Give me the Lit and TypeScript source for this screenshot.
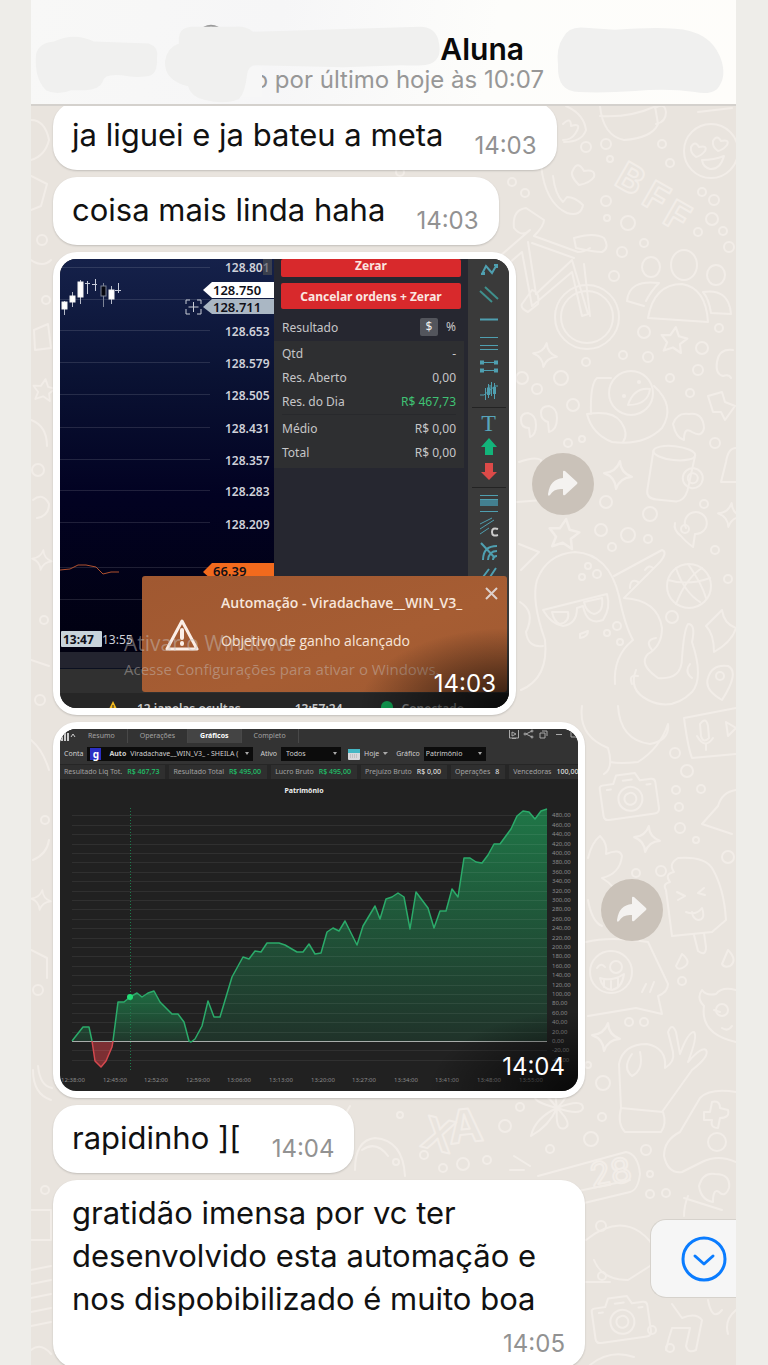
import {css, html, svg, LitElement} from 'lit';
import {customElement, property} from 'lit/decorators.js';

const PRICES: [string, number][] = [
    ['128.653', 72], ['128.579', 104], ['128.505', 136], ['128.431', 169],
    ['128.357', 201], ['128.283', 232], ['128.209', 265],
];

// x, top of wick, bottom of wick, top of body, bottom of body
const CANDLES = [
    [4, 42, 56, 43, 50], [12, 33, 48, 37, 43], [20, 21, 45, 23, 38],
    [51, 27, 45, 31, 40],
];

const EQUITY = [
    [118, 1002], [124, 1002], [130, 997], [137, 993], [142, 997], [148, 993], [154, 991], [160, 1002],
    [172, 1014], [178, 1014], [184, 1022], [189, 1041], [191, 1042], [195, 1039], [202, 1026], [208, 1001],
    [214, 1017], [220, 1017], [232, 977], [243, 957], [249, 959], [255, 951], [261, 952], [267, 943],
    [279, 943], [285, 945], [297, 952], [303, 952], [309, 944], [315, 954], [321, 953], [327, 932],
    [333, 928], [339, 931], [345, 921], [357, 945], [363, 926], [375, 906], [380, 919], [386, 899],
    [392, 897], [398, 893], [404, 897], [410, 929], [416, 892], [428, 908], [434, 928], [440, 911],
    [446, 911], [452, 889], [458, 897], [464, 858], [470, 858], [476, 862], [482, 863], [488, 855],
    [494, 844], [500, 844], [511, 829], [517, 816], [523, 811], [529, 812], [535, 819], [541, 811], [547, 809],
];
const START = [[72, 1041], [83, 1027], [89, 1027], [92, 1041]];
const LOSS = [[92, 1041], [95, 1061], [101, 1067], [106, 1061], [112, 1047], [113, 1041]];

const HOURS = ['12:38:00', '12:45:00', '12:52:00', '12:59:00', '13:06:00', '13:13:00',
    '13:20:00', '13:27:00', '13:34:00', '13:41:00', '13:48:00', '13:55:00'];

const line = (points: number[][]) => points.map(([x, y]) => `${x},${y}`).join(' ');

@customElement('chat-wallpaper')
class ChatWallpaper extends LitElement {
    static styles = css`
        :host {
            display: block;
            overflow: hidden;
        }
        svg {
            display: block;
            width: 100%;
            height: 100%;
            fill: none;
            stroke: #f2ede8;
            stroke-width: 2;
            stroke-linejoin: round;
            stroke-linecap: round;
        }
        text {
            font-family: Inter, sans-serif;
            font-weight: 700;
        }
    `;

    dots = [
        [586, 147, 5], [606, 144, 5], [610, 159, 3], [662, 144, 4], [670, 163, 4], [512, 182, 4], [525, 193, 4],
        [606, 201, 5], [607, 218, 3], [628, 223, 7], [644, 243, 4], [622, 252, 5], [614, 276, 5], [702, 192, 4],
        [714, 200, 5], [712, 219, 6], [698, 232, 4], [723, 231, 4], [729, 247, 5], [644, 332, 6], [719, 328, 4],
        [702, 348, 6], [648, 357, 5], [623, 355, 4], [586, 362, 4], [561, 378, 7], [537, 389, 5], [522, 378, 6],
        [573, 405, 6], [670, 378, 4], [690, 393, 4], [698, 370, 5], [568, 443, 4], [582, 439, 3], [715, 443, 5],
        [606, 502, 6], [650, 514, 7], [704, 504, 4], [601, 530, 6], [628, 535, 7], [648, 539, 4], [612, 547, 4],
        [715, 550, 4], [728, 579, 4], [672, 617, 6], [617, 626, 4], [607, 633, 3], [620, 642, 3], [588, 566, 3],
        [597, 574, 4], [582, 577, 3], [675, 753, 5], [687, 771, 6], [676, 790, 4], [701, 789, 4], [679, 807, 4],
        [680, 828, 5], [696, 840, 3], [728, 857, 6], [661, 871, 5], [636, 873, 4], [682, 981, 4], [629, 1022, 4],
        [644, 1022, 4], [603, 1083, 7], [588, 1065, 3], [602, 1117, 4], [591, 1139, 7], [550, 1149, 4],
        [646, 1150, 5], [650, 1174, 3], [650, 1194, 4], [666, 1193, 4], [505, 1126, 6], [520, 1107, 4],
        [400, 1115, 3], [424, 1155, 4], [443, 1168, 4], [463, 1164, 6], [487, 1160, 4], [396, 1162, 3],
        [601, 1226, 5], [602, 1276, 4], [652, 1330, 4], [670, 1348, 4], [42, 240, 5], [46, 300, 4], [38, 470, 6],
        [44, 620, 4], [40, 700, 5], [45, 820, 4], [38, 990, 5], [45, 1190, 4], [400, 172, 4],
    ];

    sparkles = [[545, 355, 12], [618, 475, 14], [730, 515, 12], [647, 839, 13], [606, 1037, 14], [42, 560, 10], [41, 900, 10]];
    stars = [[674, 340, 13], [564, 534, 15], [44, 390, 11]];

    sparkle([x, y, r]: number[]) {
        return svg`<path transform="translate(${x} ${y}) scale(${r / 12}) rotate(8)"
            d="M0-12Q2-2 12 0Q2 2 0 12Q-2 2-12 0Q-2-2 0-12Z"/>`;
    }

    star([x, y, r]: number[]) {
        return svg`<path transform="translate(${x} ${y}) scale(${r / 12}) rotate(8)"
            d="M0-12L4-4L12-3L6 3L8 11L0 7L-8 11L-6 3L-12-3L-4-4Z"/>`;
    }

    camera(x: number, y: number) {
        return svg`<g transform="translate(${x} ${y}) rotate(-8)">
            <path d="M-25-14h11l4-8h19l4 8h11q4 0 4 4v26q0 5-5 5h-46q-5 0-5-5v-27q0-3 3-3z"/>
            <circle cx="1" cy="3" r="12"/><circle cx="1" cy="3" r="6"/><path d="M-4-16h9M-21-9h4M19-9h4"/>
        </g>`;
    }

    render() {
        return html`
            <svg viewBox="31 106 705 1259" preserveAspectRatio="xMidYMin slice" aria-hidden="true">
                ${this.dots.map(([x, y, r]) => svg`<circle cx=${x} cy=${y} r=${r}/>`)}
                ${this.sparkles.map(this.sparkle)}
                ${this.stars.map(this.star)}
                ${this.camera(629, 796)}
                ${this.camera(621, 1319)}

                <!-- cup, phone, hearts -->
                <path d="M600 106q3 30 24 34q28-2 34-16l-3-18M600 116q30 2 56-10M655 108q10-6 11 4q0 10-10 12M698 112l34-4"/>
                <path d="M566 106q18 8 20 24q-4 12-22 12M563 124q8-8 8 2q12-4 4 8q-4 6-12 6"/>
                <path d="M541 165q4 38 26 48q14 4 16-8q-8-8-16-8l-4 5q-8-8-10-26"/>
                <path d="M573 170q5-10 11 1q12-2 10 6q-4 6-15 8q-10-10-6-15z"/>
                <circle cx="711" cy="151" r="27"/>
                <path d="M691 147q4-7 8 0q9-2 6 4q-4 5-9 6q-6-4-5-10zM713 141q4-7 8 0q9-2 6 4q-4 5-9 6q-6-4-5-10zM702 160q12 0 22-4q-4 14-14 13q-7-2-8-9z"/>
                <g font-size="38">
                    <text transform="translate(613 184) rotate(30)">B</text>
                    <text transform="translate(640 203) rotate(30)">F</text>
                    <text transform="translate(661 222) rotate(30)">F</text>
                </g>

                <!-- bicycle -->
                <circle cx="587" cy="317" r="32"/><circle cx="587" cy="317" r="26"/>
                <path d="M500 256l30-26q-8 8-16-2q-2-18 12-20l18 12q0 6-10 16l44 16q6 0 12-4M576 248l-2-10q20-6 30 0q6 10-2 14q-8 0-26-4M528 242l8 52l36-34l16 54l-6 2l-10-44l-40 34l-10-54l-14 12M532 243l42 15M584 264l6 52M532 290q8 2 6 14l-10 8q-8-4-6-8z"/>
                <!-- people -->
                <ellipse cx="651" cy="267" rx="9" ry="10"/><ellipse cx="684" cy="265" rx="13" ry="15"/><ellipse cx="716" cy="275" rx="9" ry="10"/>
                <path d="M648 318q6-34 34-34q24 4 26 38zM644 306l-17-5q2-22 32-18q-8 8-13 18M703 292q26-4 28 22l-20-1q-2-14-8-21"/>
                <!-- duck -->
                <circle cx="631" cy="393" r="22"/><path d="M611 378h-14q-7 6-6 36M654 386q22 20 8 42q-18 18-50 14q-20-8-25-28q26-4 34 8q8 12 2 20M628 405q6-18 22-16q-2 16-22 16z"/>
                <circle cx="624" cy="396" r="1"/><circle cx="639" cy="382" r="1"/>
                <path d="M521 420q0-7 7-7q8 2 8 12q0 10-6 12l-1-9q-8 0-8-8zM541 413q0-7 8-7q8 2 8 12q0 12-8 14l-1-10q-7-2-7-9z"/>
                <path d="M673 424q4-12 16-10q14-2 15 14q-2 10-12 4q-8-6-8 8q-8-2-11-16zM708 396l14-4l3 10l10 4l-10 14l-4-8l-8 0z"/>
                <path d="M717 362q2-14 16-12M717 362q-2 12 6 14q6-2 8 2"/>
                <!-- mug -->
                <g transform="rotate(6 672 475)"><ellipse cx="672" cy="453" rx="21" ry="7"/><path d="M651 453l-2 40q0 8 10 8h20q8-2 10-12l4-36"/><circle cx="693" cy="476" r="10"/><circle cx="693" cy="476" r="5"/></g>
                <path d="M686 528a11 11 0 1 1 9 6l-2 13q-8-6-12-11q-8-6-6-13"/><circle cx="685" cy="529" r="4"/>
                <path d="M519 462q16-6 22-2l2 40l-26 2M519 544l20 8l-18 18M736 448q-8 0-10 14l-5 20h15"/>
                <circle cx="689" cy="586" r="22"/><path d="M668 580q20 6 42-2M676 568q8 24 24 34M702 568q-16 10-26 36M688 564q14 20 18 34"/>
                <!-- head in sunglasses -->
                <path d="M545 640q-14-40-8-60q10-26 38-28q34 2 44 44q6 30 14 44q-20 16-18 44M545 640q4 38-24 50M520 602q16 10 6 30q2 16 17 14M543 610l64-16q4 14-4 26q-16 6-20-14l-6 2q0 16-14 18q-12-2-20-16z"/>
                <path d="M552 612h16q2 10-8 12q-6-2-8-12M584 602l18-4q2 14-8 16q-8-2-10-12M580 634l8-3q0 6-8 7z"/>
                <!-- tentacles -->
                <path d="M614 576l48-26q6 2-2 12l-36 36q34 2 38 30q0 18-14 26q-10 10 10 24q24 2 24-20q2-28 6-34q8 0 4 18q12 36 0 50q-20 20-44 8q-20-10-12-30"/>
                <path d="M630 588q0-10 8-6M645 570q4-6 8-2M652 650q-8-10 4-12M632 684q-4-10 6-8M692 678q-8-6-2-14M706 626q8 8 8 26q18-10 22-24q-12-4-14-18zM708 678q4-14 20-12q12 6-6 34q-18-10-14-22z"/><circle cx="720" cy="676" r="4"/>

                <!-- mic card, bell -->
                <path d="M684 718l52-10M684 718q4 30 8 40l44-4M700 724q6-8 8 2l1 12q-6 6-8-2zM697 736q8 14 16 2M706 744v6M726 722l10 6l-8 8z"/>
                <path d="M582 706q-4 30 26 42q6 20-4 26M618 706q2 34 32 38q20-4 18-20q-8 24-30 38q-18 2-28 0M736 790q-14 2-18 16l-16 18l30 10"/>
                <!-- popsicle -->
                <path d="M678 858q26-2 34 10q12 20 14 52l-14 12l-40 4l-6-46q-4-6 4-8q-6-8 4-10q-6-8 4-14zM694 935l4 16q8 6 8-4l-2-14"/>
                <path d="M677 892l8 4l-7 4M704 888l-6 5l7 2M686 912q10 4 16-4q4 12-4 12q-5-1-6-8M676 966q4-8 6-12q10 8 2 13q-6 4-8-1zM722 964l6-14q10 10 2 16q-6 2-8-2z"/>
                <path d="M588 858q4-16 12-22q8 8 6 18q14-6 16 2q-2 18-20 22q14 8 22 26M588 900q4 22 14 26"/>
                <!-- speech bubble -->
                <path d="M586 942q24-6 62 0l20 42q0 8-10 12l4 18l-26-6l-48 8"/><circle cx="611" cy="972" r="21"/><circle cx="616" cy="967" r="6"/>
                <path d="M597 968q4-6 8-1M600 978q12 4 24-4q-2 14-12 16q-10-1-12-12zM604 979v8M611 980v9M618 978v8M642 992l4-8M650 992l4-10"/>
                <path d="M736 990q-14-4-20 4q-10 2-14-4q-6 8 2 16q-4 28 32 36M714 1010l6 2M722 1028q6 4 10-2"/><circle cx="722" cy="1010" r="6"/>
                <!-- hand -->
                <path d="M621 1108l-2-44q4-20 28-20q20 4 18 24q10-6 8-16l-5-20q4-10 8 0l4 22q8-22 14-22q4 4-6 30q14-16 18-12q4 6-14 20l-30 42M640 1052q4 18-8 24q-10-8 0-22M621 1108q20 2 42 4q4 12-2 20h-36q-8-8-4-24z"/>
                <path d="M664 1156q0-16 16-24l20-34q10-10 36-6M664 1156q4 18 18 16l20-10q16-8 34 0M704 1112l6 0l2-10q8-2 8 6l8 2q2 8-8 8l-2 10q-8 0-6-8l-8 0z"/><circle cx="717" cy="1142" r="9"/>
                <!-- clover -->
                <path d="M557 1108q-24-6-22-12q6-10 22 12q-4-22 6-20q10 4-6 20q26-10 26 0q-2 8-26 0q16 16 8 20q-10 4-8-20q-8 18-26 28q4-18 26-28"/>
                <!-- clock -->
                <path d="M538 1176l88-24q12 2 14 22q-2 16-10 18l-50 12M574 1192l56-12"/>
                <g transform="translate(592 1188) rotate(-10)"><text font-size="34" style="font-weight: 400">28</text></g>
                <g transform="translate(419 1146) rotate(14)"><text font-size="44">X</text></g>
                <g transform="translate(450 1144) rotate(-6)"><text font-size="46">A</text></g>
                <path d="M514 1156l16 10M510 1170h14M355 1170q0-30 20-32q28 2 30 38M362 1150q14-10 26 6M330 1106l12 14l8-14"/>
                <path d="M699 1186q4-14 16-12q16 0 14 14q-4 10-10 4q-6-4-6 10q-12-2-14-16zM684 1198l38 12M688 1196q-4 10-4 20M586 1240q30-24 54-8q24 18 10 34l-22 14q-26 0-34-20M586 1282h24"/>
                <path d="M672 1304l10 14q14-6 20 2l-6 30q-8 4-10-4l4-18l-18 0q-4 12-6 22M708 1300q4 22 14 10M736 1310q-12 10-8 24M590 1365q20-16 44-8"/>
                <!-- left margin -->
                <path d="M31 120q14 0 18 20q-4 16-18 20M31 176l16 8l-6 22l-10 4M31 260q12 8 20 0M34 330l14-6l3 24l-16 2zM31 420q16 6 16 26M33 500q10-8 16 4q0 12-12 14M31 660l18 6M31 740q12 10 18 30M33 860q14-6 16-20M31 950l16 8v20M33 1070q0 24 18 30M38 1066q2 20 14 22M31 1210h20v30H31M31 1270l20-4M31 1284l20-4M31 1298l20-4M31 1312l20-4M31 1326l20-4M31 1350q10-8 20 4"/>
            </svg>
        `;
    }
}

@customElement('trade-photo')
class TradePhoto extends LitElement {
    static styles = css`
        :host {
            display: grid;
            grid-template: 393px 17px 24px 15px / 214px 1fr 41px;
            position: relative;
            width: 449px;
            max-width: 100%;
            overflow: hidden;
            border-radius: 16px;
            background: #303030;
            font: 12px "Noto Sans", sans-serif;
            color: #c6c6c8;
        }
        button {
            border: 0;
            padding: 0;
            background: none;
            font: inherit;
            color: inherit;
        }
        svg {
            display: block;
        }
        .prices {
            width: 100%;
            height: 393px;
            background: linear-gradient(#15214a, #0a1233 30%, #020222 60%, #010110);
            font-weight: 600;
        }
        .panel {
            background: #262730;
            padding: 0 4px 0 0;
        }
        .orders {
            display: grid;
            gap: 6px;
            padding: 0 3px 0 7px;
        }
        .order {
            height: 26px;
            border-radius: 2px;
            background: #d8292c;
            color: #fbe6e0;
            font-weight: 700;
            font-size: 12px;
        }
        .order:first-child {
            height: 18px;
            line-height: 14px;
            padding-bottom: 4px;
        }
        .result {
            display: flex;
            align-items: center;
            height: 28px;
            padding: 4px 4px 0 8px;
        }
        .result span {
            flex: 1;
        }
        .result button {
            width: 18px;
            height: 18px;
            margin-left: 4px;
            border-radius: 2px;
            line-height: 18px;
        }
        .result .on {
            background: #53555c;
            color: #eee;
        }
        dl {
            margin: 0;
            padding: 1px 8px 3px;
            background: #2e2f31;
        }
        dl div {
            display: flex;
            justify-content: space-between;
            line-height: 24px;
        }
        .split {
            border-top: 1px solid #28292c;
            padding-top: 2px;
        }
        dd {
            margin: 0;
        }
        .gain {
            color: #3fc274;
        }
        .tools {
            grid-column: 3;
            grid-row: 1 / 4;
            display: flex;
            flex-direction: column;
            align-items: center;
            background: #3a3a3a;
        }
        .tools svg {
            width: 20px;
            height: 24px;
            fill: none;
            stroke: #4f9fb0;
            stroke-width: 1;
        }
        .tools hr {
            width: 34px;
            margin: 4px 0 3px;
            border: 0;
            border-top: 1px solid #232323;
        }
        .tools .letter {
            height: 24px;
            font: 24px/24px "Liberation Serif", serif;
            color: #58a5bb;
        }
        .strip {
            grid-column: 1 / 3;
            background: #23242f;
            border-bottom: 1px solid #0b1020;
        }
        .status {
            grid-column: 1 / 4;
            grid-row: 4;
            display: flex;
            align-items: flex-start;
            height: 7px;
            padding: 8px 42px 0 47px;
            overflow: hidden;
            background: #262626;
            line-height: 16px;
            font-weight: 600;
            white-space: nowrap;
        }
        .status svg {
            flex: none;
        }
        .status .hidden-windows {
            margin: 0 54px 0 18px;
        }
        .status .online {
            flex: none;
            width: 12px;
            height: 12px;
            margin: 0 9px 0 38px;
            border-radius: 50%;
            background: #10a354;
        }
        .status .muted {
            color: #8a8a8a;
        }
        .toast {
            position: absolute;
            inset: 317px 2px 16px 82px;
            display: flex;
            align-items: flex-start;
            border-radius: 3px;
            background: linear-gradient(160deg, #a05831, #a65d33 60%, #a05a32);
            color: #f7e6db;
            font: 13px/18px "Open Sans", sans-serif;
        }
        .toast .warn {
            width: 34px;
            height: 34px;
            margin: 42px 22px 0 23px;
        }
        .toast h2 {
            margin: 18px 0 20px;
            font-size: 14px;
            font-weight: 600;
            white-space: nowrap;
        }
        .toast p {
            margin: 0;
            font-size: 14px;
        }
        .toast button {
            margin: 11px 9px 0 auto;
        }
        .watermark {
            position: absolute;
            left: 64px;
            top: 372px;
            color: #c8c0bc77;
            font: 21px/24px "Open Sans", sans-serif;
        }
        .watermark small {
            display: block;
            font-size: 15px;
            line-height: 28px;
        }
    `;

    render() {
        return html`
            <svg class="prices" viewBox="0 0 214 393" preserveAspectRatio="none">
                <g stroke="#ffffff" stroke-opacity=".12">
                    ${[8, 40, 71, 103, 135, 168, 200, 231, 263, 308, 340].map(y => svg`<path d=${`M0 ${y}.5h150`}/>`)}
                </g>
                <g stroke="#f4f4f4" stroke-width="1">
                    ${CANDLES.map(([x, top, bottom, open, close]) => svg`
                        <path d=${`M${x}.5 ${top}V${bottom}`} stroke="#b5bac8"/>
                        <rect x=${x - 2} y=${open} width="5" height=${close - open} fill="#fff"/>`)}
                    <path d="M27.5 22v13M25 24.500h5M35.500 20v12M32 25.500h5M58.500 24v10M55 31.500h6" stroke="#c7ccda"/>
                    <path d="M43.500 24v24" stroke="#7d8496"/><rect x="41" y="27" width="5" height="10" fill="#05060e" stroke="#7d8496"/>
                </g>
                <g fill="none" stroke="#c9cdd6">
                    <path d="M126 45v-4h4M137 41h4v4M141 50v5h-4M130 55h-4v-5M133.500 43v10M128.500 48h10"/>
                </g>
                <rect x="203" y="0" width="9" height="16" fill="#3a3f4d"/>
                <path d="M143 31l9-8h62v16h-62z" fill="#fff"/>
                <path d="M143 48l9-8h62v15h-62z" fill="#aab7c4"/>
                <path d="M143 313l9-9h62v17h-62z" fill="#f26a1d"/>
                <path d="M0 311l10-1l8-4h8l10 2l7 7l8-2h8" fill="none" stroke="#b0512f"/>
                <rect x="1" y="372" width="41" height="16" rx="1" fill="#c8d3da"/>
                <g fill="#cfd1d9">
                    <text x="165" y="13">128.80<tspan fill="#7a7d86">1</tspan></text>
                    ${PRICES.map(([price, y]) => svg`<text x="165" y=${y + 5}>${price}</text>`)}
                    <text x="42" y="385" font-weight="400">13:55</text>
                </g>
                <g fill="#101018" font-size="13">
                    <text x="153" y="36">128.750</text>
                    <text x="153" y="53">128.711</text>
                    <text x="153" y="317">66.39</text>
                    <text x="3" y="385" font-weight="700" font-size="12">13:47</text>
                </g>
            </svg>

            <div class="panel">
                <div class="orders">
                    <button class="order">Zerar</button>
                    <button class="order">Cancelar ordens + Zerar</button>
                </div>
                <div class="result">
                    <span>Resultado</span>
                    <button class="on">$</button>
                    <button>%</button>
                </div>
                <dl>
                    <div><dt>Qtd</dt><dd>-</dd></div>
                    <div><dt>Res. Aberto</dt><dd>0,00</dd></div>
                    <div><dt>Res. do Dia</dt><dd class="gain">R$ 467,73</dd></div>
                    <div class="split"><dt>Médio</dt><dd>R$ 0,00</dd></div>
                    <div><dt>Total</dt><dd>R$ 0,00</dd></div>
                </dl>
            </div>

            <div class="tools">
                <button aria-label="Ziguezague"><svg viewBox="0 0 20 24"><path d="M3 15l4-8l6 7l4-7M2 15h3v-2M15 6h3v3" stroke-width="2"/></svg></button>
                <button aria-label="Canal"><svg viewBox="0 0 20 24"><path d="M1 8l12 11M6 4l13 12" stroke="#3f8f8c" stroke-width="2"/></svg></button>
                <button aria-label="Linha horizontal"><svg viewBox="0 0 20 24"><path d="M1 12.500h18" stroke-width="2"/></svg></button>
                <button aria-label="Linhas paralelas"><svg viewBox="0 0 20 24"><path d="M1 6.500h18M1 14.500h18M1 18.500h18"/></svg></button>
                <button aria-label="Segmentos"><svg viewBox="0 0 20 24"><path d="M2 7.500h16M2 15.500h16"/><path d="M1 7.500h4M15 7.500h4M1 15.500h4M15 15.500h4" stroke-width="4"/></svg></button>
                <button aria-label="Padrões"><svg viewBox="0 0 20 24"><path d="M1 16h4l11-9h3M6.500 9v12M9.500 5v14M12.500 3v14M15.500 4v16M8 9h3M11 6v9"/><path d="M9.500 9v7M15.500 8v7" stroke-width="3"/></svg></button>
                <hr>
                <button class="letter" aria-label="Texto">T</button>
                <button aria-label="Compra"><svg viewBox="0 0 20 24"><path d="M10 3l8 9h-4v8H6v-8H2z" fill="#13b47a" stroke="none"/></svg></button>
                <button aria-label="Venda"><svg viewBox="0 0 20 24"><path d="M10 21l8-8h-4V4H6v9H2z" fill="#dc4a48" stroke="none"/></svg></button>
                <hr>
                <button aria-label="Retração"><svg viewBox="0 0 20 24"><path d="M1 4.500h18M1 20.500h18" /><path d="M1 12h18" stroke-width="6" stroke="#437f90"/><path d="M1 8.500h18"/></svg></button>
                <button aria-label="Canal com cor"><svg viewBox="0 0 20 24"><path d="M1 9l12-6M1 14l14-9M1 19l9-6"/><path d="M19 14q-6-2-6 3t6 3" stroke="#ccc" stroke-width="2"/></svg></button>
                <button aria-label="Arcos"><svg viewBox="0 0 20 24"><path d="M2 4l14 15M4 21q0-14 14-14M9 21q1-9 9-9M14 21q0-4 4-4" stroke-width="2"/></svg></button>
                <button aria-label="Leque"><svg viewBox="0 0 20 24"><path d="M4 14l6-8M11 14l6-9" stroke-width="2"/></svg></button>
            </div>

            <div class="strip"></div>
            <div class="status">
                <svg width="12" height="12" viewBox="0 0 12 12"><path d="M6 0l6 12H0z" fill="#f2b91d"/><path d="M6 4v4" stroke="#222"/></svg>
                <span class="hidden-windows">12 janelas ocultas</span>
                <span>13:57:24</span>
                <span class="online"></span>
                <span class="muted">Conectado</span>
            </div>

            <div class="toast">
                <svg class="warn" viewBox="0 0 34 34" fill="none" stroke="#fbeee6" stroke-width="3" stroke-linejoin="round" stroke-linecap="round">
                    <path d="M17 3L32 31H2z"/><path d="M17 12v8M17 25v1" stroke-width="4"/>
                </svg>
                <div>
                    <h2>Automação - Viradachave__WIN_V3_</h2>
                    <p>Objetivo de ganho alcançado</p>
                </div>
                <button aria-label="Fechar">
                    <svg width="13" height="13" viewBox="0 0 13 13" stroke="#ddd0cb" stroke-width="2"><path d="M1 1l11 11M12 1L1 12"/></svg>
                </button>
            </div>
            <div class="watermark">Ativar o Windows<small>Acesse Configurações para ativar o Windows.</small></div>
        `;
    }
}

@customElement('equity-photo')
class EquityPhoto extends LitElement {
    static styles = css`
        :host {
            display: flex;
            flex-direction: column;
            width: 518px;
            max-width: 100%;
            overflow: hidden;
            border-radius: 16px;
            background: #212121;
            color: #a2a2a2;
            font: 7px/14px "Noto Sans", sans-serif;
        }
        button, select {
            appearance: none;
            border: 0;
            margin: 0;
            padding: 0;
            background: none;
            font: inherit;
            color: inherit;
        }
        svg {
            display: block;
        }
        .tabs {
            display: flex;
            background: #333;
        }
        .tabs button {
            height: 14px;
            padding: 0 12px;
            border-right: 1px solid #484848;
        }
        .tabs .current {
            background: #444;
            color: #fff;
            font-weight: 700;
        }
        .window {
            margin: 0 -4px 0 auto;
        }
        .filters {
            display: flex;
            align-items: center;
            height: 21px;
            padding: 0 4px;
            background: #333;
            color: #d0d0d0;
        }
        .field {
            position: relative;
            display: flex;
            align-items: center;
            box-sizing: border-box;
            height: 14px;
            margin: 0 7px 0 4px;
            padding-left: 5px;
            background: #0c0c0c;
            line-height: 14px;
        }
        .field select {
            width: 100%;
            height: 14px;
        }
        .field::after {
            content: "";
            margin: 0 4px 0 auto;
            border: 2px solid transparent;
            border-top: 3px solid #aaa;
            border-bottom: 0;
        }
        .account {
            width: 166px;
            padding-left: 3px;
            white-space: nowrap;
        }
        .account i {
            width: 11px;
            margin-right: 8px;
            background: #2b2fc4;
            color: #fff;
            font: 700 10px/12px "Noto Sans", sans-serif;
            text-align: center;
        }
        .account b {
            margin-right: 4px;
        }
        .asset {
            width: 60px;
        }
        .chart-kind {
            width: 62px;
            padding-left: 2px;
        }
        .today {
            display: flex;
            align-items: center;
            gap: 4px;
            margin-right: 8px;
        }
        .stats {
            display: flex;
            gap: 4px;
            padding-top: 1px;
            background: #262626;
            white-space: nowrap;
        }
        .stats div {
            display: flex;
            gap: 5px;
            flex: none;
            padding: 0 6px 0 4px;
            background: #2f2f2f;
        }
        .stats b {
            color: #ddd;
            font-weight: 500;
        }
        .stats .gain {
            color: #1fc46b;
        }
        h2 {
            margin: 0;
            padding: 5px 30px 2px 0;
            font-size: 7px;
            line-height: 14px;
            text-align: center;
            color: #eee;
        }
        .chart {
            width: 100%;
        }
        .axis {
            font-size: 6px;
            fill: #8b8b8b;
        }
    `;

    stats: [string, string, boolean][] = [
        ['Resultado Liq Tot.', 'R$ 467,73', true],
        ['Resultado Total', 'R$ 495,00', true],
        ['Lucro Bruto', 'R$ 495,00', true],
        ['Prejuízo Bruto', 'R$ 0,00', false],
        ['Operações', '8', false],
        ['Vencedoras', '100,00', false],
    ];

    render() {
        const levels = Array.from({length: 27}, (_, i) => 480 - i * 20);
        const levelY = (value: number) => Math.round(1041 - value * 0.47);
        return html`
            <div class="tabs">
                <svg class="bars" width="16" height="14" viewBox="0 0 16 14" stroke="#ccc" fill="none"><path d="M2 6v6M5 3v9M8 4v8" stroke-width="2"/><path d="M11 8l2-3l2 3"/></svg>
                <button>Resumo</button>
                <button>Operações</button>
                <button class="current">Gráficos</button>
                <button>Completo</button>
                <svg class="window" width="76" height="14" viewBox="0 0 76 14" stroke="#aaa" fill="none">
                    <path d="M3.500 1v8h9V1M6 9.500h4M6 3l4 2l-4 2zM20 5l6-3M20 5l6 3M34 4h5v5h-5zM36 2h5v5M50 5.500h6M65 2v6h8"/>
                    <circle cx="19" cy="5" r="1"/><circle cx="26" cy="2" r="1"/><circle cx="26" cy="8" r="1"/>
                </svg>
            </div>
            <div class="filters">
                <span>Conta</span>
                <button class="field account"><i>g</i><b>Auto</b>Viradachave__WIN_V3_ - SHEILA (</button>
                <label for="asset">Ativo</label>
                <span class="field asset"><select id="asset"><option>Todos</option></select></span>
                <button class="today">
                    <svg width="12" height="12" viewBox="0 0 12 12"><rect y="1" width="12" height="11" rx="1" fill="#d8d8dc"/><path d="M0 1h12v4H0z" fill="#45b7c4"/><path d="M2 7h8M2 9h8" stroke="#aaa" stroke-dasharray="1 1"/></svg>
                    Hoje
                    <svg width="5" height="3" viewBox="0 0 5 3"><path d="M0 0h5L2 3z" fill="#aaa"/></svg>
                </button>
                <label for="kind">Gráfico</label>
                <span class="field chart-kind"><select id="kind"><option>Patrimônio</option></select></span>
            </div>
            <div class="stats">
                ${this.stats.map(([label, value, gain]) => html`
                    <div><span>${label}</span><b class=${gain ? 'gain' : ''}>${value}</b></div>`)}
            </div>
            <h2>Patrimônio</h2>
            <svg class="chart" viewBox="60 800 518 291">
                <defs>
                    <linearGradient id="up" gradientUnits="userSpaceOnUse" x1="0" y1="809" x2="0" y2="1041">
                        <stop offset="0" stop-color="#1f7647"/><stop offset="1" stop-color="#20332a"/>
                    </linearGradient>
                    <linearGradient id="small" gradientUnits="userSpaceOnUse" x1="0" y1="990" x2="0" y2="1041">
                        <stop offset="0" stop-color="#1e6d42"/><stop offset="1" stop-color="#20382c"/>
                    </linearGradient>
                </defs>
                <polygon points=${`${line(EQUITY.slice(11))} 547,1041`} fill="url(#up)"/>
                <polygon points=${`113,1041 ${line(EQUITY.slice(0, 12))}`} fill="url(#small)"/>
                <polygon points=${line(START)} fill="url(#small)"/>
                <polygon points=${line(LOSS)} fill="#7c2f33"/>
                <g stroke="#ffffff" stroke-opacity=".07">
                    ${levels.map(value => svg`<path d=${`M72 ${levelY(value)}.5H547`}/>`)}
                </g>
                <path d="M130.500 808v263" stroke="#1d7a4b" stroke-dasharray="1 2"/>
                <path d="M72 1041.500H547" stroke="#a9adab"/>
                <g fill="none" stroke-width="1.500" stroke-linejoin="round">
                    <polyline points=${line(START)} stroke="#2bab6a"/>
                    <polyline points=${line(LOSS)} stroke="#d4484e"/>
                    <polyline points=${`113,1041 ${line(EQUITY)}`} stroke="#2bab6a"/>
                </g>
                <circle cx="130" cy="997" r="3" fill="#23dd76"/>
                <g class="axis">
                    ${levels.map(value => svg`<text x="552" y=${levelY(value) + 2}>${value},00</text>`)}
                    ${HOURS.map((hour, i) => svg`<text x=${Math.round(73 + i * 41.6)} y="1082" text-anchor="middle">${hour}</text>`)}
                </g>
            </svg>
        `;
    }
}

@customElement('chat-message')
class ChatMessage extends LitElement {
    @property() text = '';
    @property() time = '';
    @property({type: Boolean}) photo = false;

    static styles = css`
        :host {
            display: flex;
            align-items: center;
            gap: 16px;
        }
        .bubble {
            position: relative;
            display: flex;
            flex-wrap: wrap;
            justify-content: flex-end;
            align-items: flex-end;
            column-gap: 31px;
            row-gap: 14px;
            box-sizing: border-box;
            max-width: 532px;
            padding: 11px 20px 14px 19px;
            border-radius: 24px;
            background: #fff;
            box-shadow: 0 1px 2px #0000002b;
        }
        p {
            flex: 0 1 auto;
            margin: 0 auto 0 0;
            font-size: 31px;
            line-height: 43px;
            color: #111;
        }
        time {
            font-size: 24px;
            line-height: 20px;
            color: #929292;
        }
        .photo {
            padding: 7px;
        }
        .photo time {
            position: absolute;
            right: 20px;
            bottom: 21px;
            color: #fff;
        }
        .shade {
            position: absolute;
            inset: 7px;
            border-radius: 16px;
            background: radial-gradient(ellipse 150px 80px at 100% 100%, #000000c0, #00000000);
        }
        .forward {
            flex: none;
            width: 62px;
            height: 62px;
            padding: 0;
            border: 0;
            border-radius: 50%;
            background: #cac2b9;
        }
        .forward svg {
            display: block;
            margin: auto;
        }
    `;

    render() {
        if (!this.photo) {
            return html`<div class="bubble"><p>${this.text}</p><time>${this.time}</time></div>`;
        }
        return html`
            <div class="bubble photo">
                <slot></slot>
                <div class="shade"></div>
                <time>${this.time}</time>
            </div>
            <button class="forward" aria-label="Encaminhar">
                <svg width="32" height="28" viewBox="0 0 32 28" fill="#f4f2f0">
                    <path d="M16 2q0-2 2-1l12 11q1 1 0 2L18 25q-2 1-2-1v-5Q7 18 3 25q-2 2-2-1Q3 9 16 8z"/>
                </svg>
            </button>
        `;
    }
}

@customElement('app-root')
class AppRoot extends LitElement {
    static styles = css`
        :host {
            display: block;
            height: 100vh;
            padding: 0 32px 0 31px;
            box-sizing: border-box;
            overflow: hidden;
            background: #eeede9;
            font-family: Inter, sans-serif;
        }
        .phone {
            position: relative;
            display: flex;
            flex-direction: column;
            height: 100%;
            background: #e9e4de;
            overflow: hidden;
        }
        header {
            position: relative;
            z-index: 1;
            display: flex;
            flex: none;
            flex-direction: column;
            align-items: flex-end;
            justify-content: flex-end;
            box-sizing: border-box;
            height: 106px;
            padding: 0 192px 9px 0;
            border-bottom: 2px solid #d4d1cd;
            background: linear-gradient(100deg, #f8f8f7, #f6f6f7 35%, #fdfdfb 65%, #fefdfa);
        }
        h1 {
            margin: 0 20px 0 0;
            font-size: 30px;
            line-height: 32px;
            font-weight: 600;
            color: #0a0a0a;
        }
        header p {
            margin: 0;
            font-size: 24px;
            line-height: 30px;
            color: #979797;
        }
        .marks {
            position: absolute;
            inset: 0;
            width: 100%;
            height: 100%;
        }
        main {
            position: relative;
            flex: 1;
            min-height: 0;
        }
        chat-wallpaper {
            position: absolute;
            inset: 0;
        }
        .messages {
            position: relative;
            display: flex;
            flex-direction: column;
            gap: 7px;
            margin-top: -4px;
            padding: 0 22px;
        }
        .latest {
            position: absolute;
            right: 0;
            bottom: 67px;
            width: 86px;
            height: 79px;
            padding: 0 0 0 20px;
            border: 1px solid #d6d2cc;
            border-right: 0;
            border-radius: 16px 0 0 16px;
            background: #f6f6f6;
        }
        .latest svg {
            display: block;
            margin: auto;
        }
    `;

    render() {
        return html`
            <div class="phone">
                <header>
                    <h1>Aluna</h1>
                    <p>o por último hoje às 10:07</p>
                    <svg class="marks" viewBox="31 0 705 105" preserveAspectRatio="none" fill="#f0f0ef" aria-hidden="true">
                        <path d="M204 28q7-4 14 0" fill="none" stroke="#999" stroke-width="2"/>
                        <path d="M240 68h22v30h-22z" fill="#f7f7f7"/>
                        <path d="M36 55q3-12 18-13q20-10 40 0l55 2q10 4 8 14q1 18-10 19q-12 2-25-1q-18-2-19 6q-4 9-18 9h-14q-14 6-25 0q-12-12-10-36z"/>
                        <path d="M165 62q2-14 14-18q-2-16 12-17h44q10-1 18 5L420 27q14 0 18 12q5 18-5 24q-6 4-30 3l-60 2l-87-2q-8 0-9 10q-2 18-8 24q-14 6-34 1q-14-3-17-14q-24-6-23-25z"/>
                        <path d="M558 66q-2-18 5-28q6-12 22-10l30 2q40-3 60-1q34 2 45 28q8 20-3 33q-8 6-22 3q-28-4-60-1q-30 2-56 1q-22 0-21-27z"/>
                    </svg>
                </header>
                <main>
                    <chat-wallpaper></chat-wallpaper>
                    <div class="messages">
                        <chat-message text="ja liguei e ja bateu a meta" time="14:03"></chat-message>
                        <chat-message text="coisa mais linda haha" time="14:03"></chat-message>
                        <chat-message photo time="14:03"><trade-photo></trade-photo></chat-message>
                        <chat-message photo time="14:04"><equity-photo></equity-photo></chat-message>
                        <chat-message text="rapidinho ][" time="14:04"></chat-message>
                        <chat-message text="gratidão imensa por vc ter desenvolvido esta automação e nos dispobibilizado é muito boa" time="14:05"></chat-message>
                    </div>
                </main>
                <button class="latest" aria-label="Ir para o fim">
                    <svg width="46" height="46" viewBox="0 0 46 46" fill="none" stroke="#0a7cff" stroke-width="3" stroke-linecap="round" stroke-linejoin="round">
                        <circle cx="23" cy="23" r="21"/><path d="M14 20l9 8l9-8"/>
                    </svg>
                </button>
            </div>
        `;
    }
}
